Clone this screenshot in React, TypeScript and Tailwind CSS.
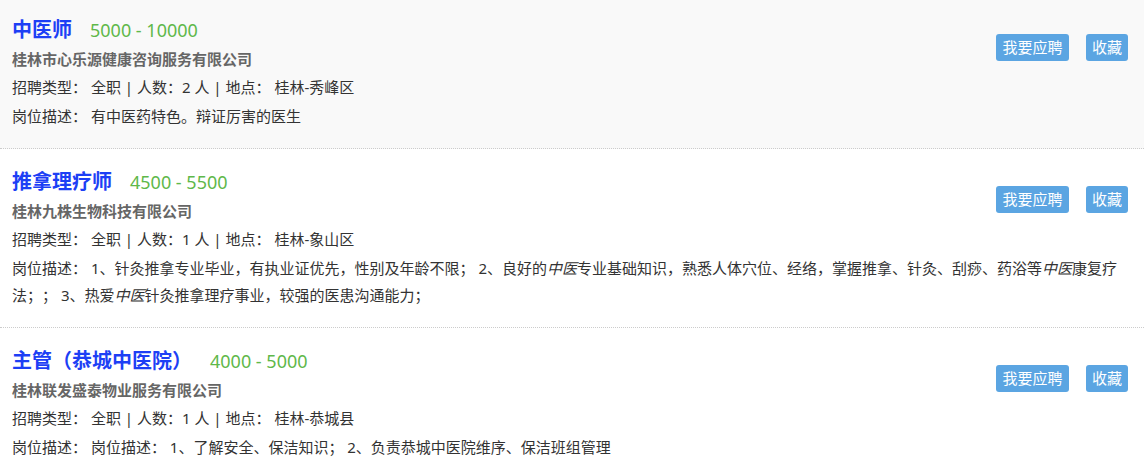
import React from "react";

type Job = {
  title: string;
  salary: string;
  company: string;
  count: number;
  place: string;
  desc: React.ReactNode;
  bg: string;
};

const jobs: Job[] = [
  {
    title: "中医师",
    salary: "5000 - 10000",
    company: "桂林市心乐源健康咨询服务有限公司",
    count: 2,
    place: "桂林-秀峰区",
    desc: <>有中医药特色。辩证厉害的医生</>,
    bg: "bg-[#f9f9f9]",
  },
  {
    title: "推拿理疗师",
    salary: "4500 - 5500",
    company: "桂林九株生物科技有限公司",
    count: 1,
    place: "桂林-象山区",
    desc: (
      <>
        1、针灸推拿专业毕业，有执业证优先，性别及年龄不限； 2、良好的<em className="italic">中医</em>专业基础知识，熟悉人体穴位、经络，掌握推拿、针灸、刮痧、药浴等<em className="italic">中医</em>康复疗法；； 3、热爱<em className="italic">中医</em>针灸推拿理疗事业，较强的医患沟通能力；
      </>
    ),
    bg: "bg-white",
  },
  {
    title: "主管（恭城中医院）",
    salary: "4000 - 5000",
    company: "桂林联发盛泰物业服务有限公司",
    count: 1,
    place: "桂林-恭城县",
    desc: <>岗位描述： 1、了解安全、保洁知识； 2、负责恭城中医院维序、保洁班组管理</>,
    bg: "bg-white",
  },
];

function Card({ job }: { job: Job }) {
  return (
    <div className={`${job.bg} border-b border-dotted border-[#cccccc] pl-3 pr-4 pt-[18px] pb-[18px]`}>
      <div className="float-right mt-[19px] flex gap-[17px]">
        <button className="h-[27px] w-[73px] rounded-[3px] bg-[#5ba5e2] text-[15px] leading-[27px] text-white">
          我要应聘
        </button>
        <button className="h-[27px] w-[42px] rounded-[3px] bg-[#5ba5e2] text-[15px] leading-[27px] text-white">
          收藏
        </button>
      </div>
      <div className="flex items-baseline gap-[18px] leading-[30px]">
        <span className="text-[20px] font-bold text-[#1d3ff5]">{job.title}</span>
        <span className="text-[18px] text-[#5fb84a]">{job.salary}</span>
      </div>
      <div className="text-[15px] font-bold leading-[28px] text-[#666666]">{job.company}</div>
      <div className="text-[15px] leading-[29px] text-[#333333]">
        招聘类型： 全职 | 人数：{job.count} 人 | 地点： {job.place}
      </div>
      <div className="mt-[1px] text-[15px] leading-[27px] text-[#333333]">
        岗位描述： {job.desc}
      </div>
    </div>
  );
}

export default function App() {
  return (
    <div
      className="h-[467px] w-[1144px] overflow-hidden bg-white [text-spacing-trim:space-all]"
      style={{ fontFamily: '"Noto Sans", "Noto Sans CJK SC", sans-serif' }}
    >
      <div className="-mt-[3px]">
        {jobs.map((j) => (
          <Card key={j.title} job={j} />
        ))}
      </div>
    </div>
  );
}
